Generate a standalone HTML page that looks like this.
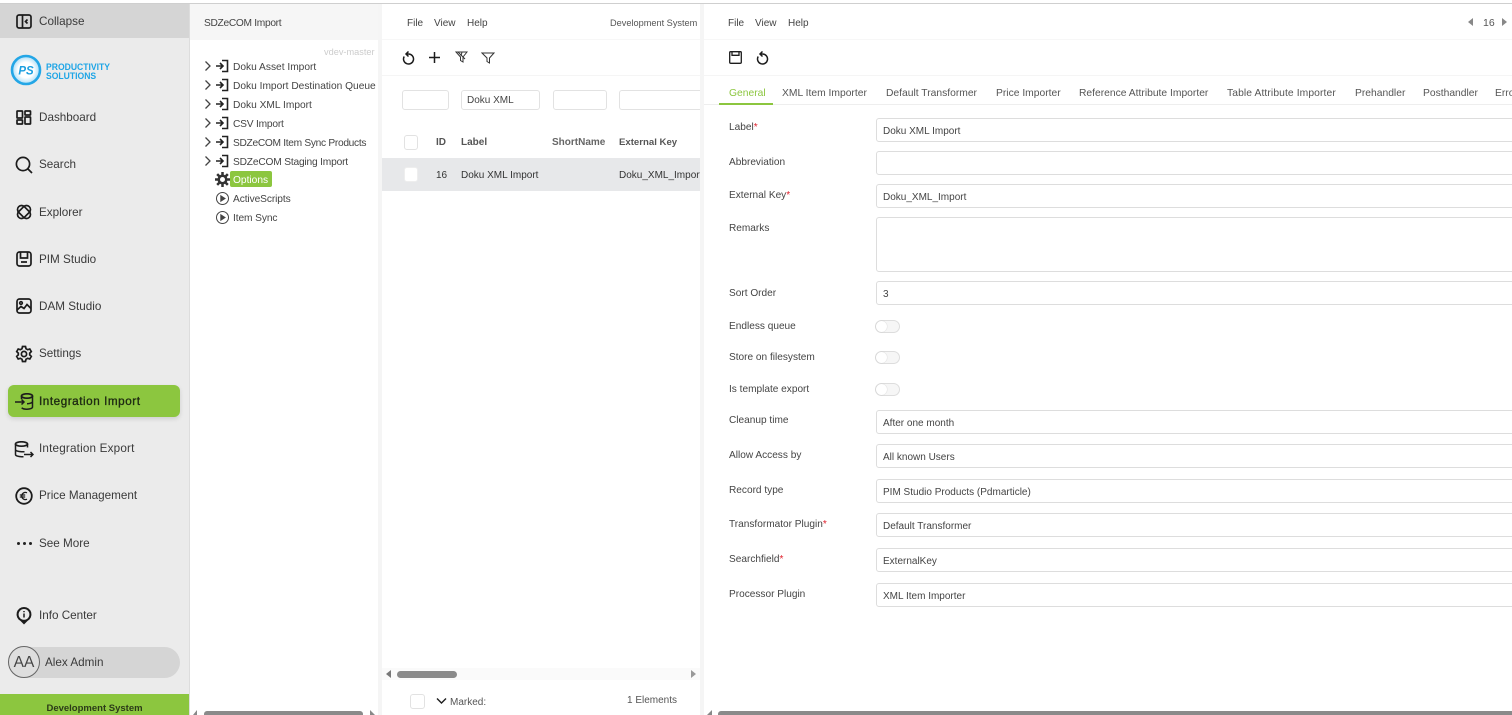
<!DOCTYPE html>
<html><head><meta charset="utf-8"><title>Integration Import</title>
<style>
html,body{margin:0;padding:0;width:1512px;height:715px;overflow:hidden;background:#fff}
body{position:relative;font-family:"Liberation Sans",sans-serif;color:#444;font-size:10.2px}
.a{position:absolute}
.t{position:absolute;white-space:nowrap;line-height:14px}
.n{font-size:11.7px;left:39px;color:#3a3a3a;line-height:16px;margin-top:1px}
.i{position:absolute;fill:none;stroke:#1c1c1c;stroke-width:1.7}
.tr{left:233px;color:#444;margin-top:2px}
.m{font-size:10px;top:17px}
.box{position:absolute;background:#fff;border:1px solid #e2e2e2;border-radius:3px;box-sizing:border-box}
.inp{position:absolute;left:876px;width:650px;height:24px;background:#fff;border:1px solid #ddd;border-radius:3px;box-sizing:border-box;padding:1px 0 0 6px;line-height:23px;font-size:10px;color:#444}
.lb{left:729px;color:#444;font-size:10.1px;margin-top:1px}
.lb b{color:#e0202c;font-weight:400}
.tab{top:87px;color:#555;font-size:10.3px}
.th{font-weight:700;color:#555;font-size:10px;top:136px}
.tg{position:absolute;left:875px;width:25px;height:13px;border:1px solid #ddd;border-radius:7px;box-sizing:border-box;background:#f6f6f6}
.tg i{position:absolute;left:0;top:0;width:11px;height:11px;border-radius:50%;background:#fff;box-shadow:0 0 1px #bbb}
</style></head><body>
<!-- backgrounds -->
<div class="a" style="left:0;top:4px;width:189px;height:711px;background:#ebebeb"></div>
<div class="a" style="left:189px;top:4px;width:1px;height:711px;background:#ddd"></div>
<div class="a" style="left:0;top:4px;width:189px;height:34px;background:#d5d5d5"></div>
<div class="a" style="left:190px;top:4px;width:192px;height:36px;background:#f6f6f6"></div>
<div class="a" style="left:378px;top:4px;width:4px;height:711px;background:#f5f5f5"></div>
<div class="a" style="left:700px;top:4px;width:4px;height:711px;background:#f5f5f5"></div>
<div class="a" style="left:382px;top:39px;width:318px;height:1px;background:#f7f7f7"></div>
<div class="a" style="left:382px;top:75px;width:318px;height:1px;background:#f5f5f5"></div>
<div class="a" style="left:704px;top:39px;width:808px;height:1px;background:#f7f7f7"></div>
<div class="a" style="left:704px;top:75px;width:808px;height:1px;background:#f5f5f5"></div>
<div class="a" style="left:704px;top:104px;width:808px;height:1px;background:#eee"></div>
<div class="a" style="left:0;top:3px;width:1512px;height:1px;background:#cfcfcf"></div>

<!-- sidebar -->
<svg class="i" style="left:16px;top:14px" width="16" height="15" viewBox="0 0 16 15"><rect x="1" y="1" width="14" height="13" rx="2"/><path d="M6.5 1v13M11.5 5.500L9.500 7.500l2 2"/></svg>
<div class="t n" style="top:13px">Collapse</div>

<svg class="a" style="left:10px;top:54px" width="32" height="32" viewBox="0 0 32 32"><defs><radialGradient id="g"><stop offset="55%" stop-color="#fff"/><stop offset="100%" stop-color="#a9ddf7"/></radialGradient></defs><circle cx="16" cy="16" r="14" fill="url(#g)" stroke="#23a6e6" stroke-width="2.600"/><text x="16" y="20.500" text-anchor="middle" font-family="Liberation Sans" font-size="11.500" font-weight="700" font-style="italic" fill="#1b9fe0">PS</text></svg>
<div class="t" style="left:46px;top:62px;font-size:8.600px;line-height:8px;font-weight:700;color:#1ea5e6;transform-origin:0 0;transform:scale(1,1.12)">PRODUCTIVITY<br>SOLUTIONS</div>

<svg class="i" style="left:16px;top:110px" width="16" height="15" viewBox="0 0 16 15"><rect x="1" y="1" width="5.500" height="7" rx=".5"/><rect x="1" y="10" width="5.500" height="4" rx=".5"/><rect x="9" y="1" width="5.500" height="4" rx=".5"/><rect x="9" y="7" width="5.500" height="7" rx=".5"/></svg>
<div class="t n" style="top:109px">Dashboard</div>

<svg class="i" style="left:15px;top:156px" width="18" height="18" viewBox="0 0 18 18"><circle cx="8" cy="8" r="6.600"/><path d="M13 13l4 4"/></svg>
<div class="t n" style="top:156px">Search</div>

<svg class="i" style="left:15px;top:203px" width="18" height="18" viewBox="0 0 18 18"><rect x="1.500" y="5" width="15" height="8" rx="4" transform="rotate(45 9 9)"/><rect x="1.500" y="5" width="15" height="8" rx="4" transform="rotate(-45 9 9)"/></svg>
<div class="t n" style="top:204px">Explorer</div>

<svg class="i" style="left:16px;top:251px" width="16" height="16" viewBox="0 0 16 16"><rect x="1" y="1" width="14" height="14" rx="2.500"/><path d="M4.500 1v6h7V1M5 11h6"/></svg>
<div class="t n" style="top:251px">PIM Studio</div>

<svg class="i" style="left:16px;top:298px" width="16" height="16" viewBox="0 0 16 16"><rect x="1" y="1" width="14" height="14" rx="2.500"/><circle cx="5" cy="5" r="1.300"/><path d="M1 12l4-3.500 3 2 3-4 4 4"/></svg>
<div class="t n" style="top:298px">DAM Studio</div>

<svg class="i" style="left:15px;top:345px" width="18" height="18" viewBox="0 0 18 18"><circle cx="9" cy="9" r="2.600"/><path d="M7.500 1.500h3l.5 2.200 1.700 1 2.100-.7 1.500 2.600-1.600 1.500v1.800l1.600 1.500-1.500 2.600-2.100-.7-1.700 1-.5 2.200h-3l-.5-2.200-1.700-1-2.100.7-1.500-2.600 1.600-1.500V8.100L1.700 6.600 3.200 4l2.100.7 1.700-1z"/></svg>
<div class="t n" style="top:345px">Settings</div>

<div class="a" style="left:8px;top:385px;width:172px;height:32px;background:#8cc63f;border-radius:6px;box-shadow:0 2px 5px rgba(0,0,0,.12)"></div>
<svg class="i" style="left:14px;top:393px" width="20" height="17" viewBox="0 0 20 17"><ellipse cx="13" cy="3" rx="5.500" ry="2.200"/><path d="M7.500 3v3M18.500 3v11c0 1.300-2.500 2.200-5.500 2.200-2.500 0-4.500-.6-5.300-1.500M18.500 8.500c0 1.200-2.500 2.200-5.500 2.200M1 9h9M7.500 6.500L10 9l-2.500 2.500" stroke-width="1.500"/></svg>
<div class="t n" style="top:393px;color:#1e2a12;-webkit-text-stroke:.35px #1e2a12;letter-spacing:.55px">Integration Import</div>

<svg class="i" style="left:14px;top:441px" width="20" height="17" viewBox="0 0 20 17"><ellipse cx="7.500" cy="3" rx="6" ry="2.200"/><path d="M1.500 3v10.500c0 1.300 2.700 2.200 6 2.200h2M1.500 8.500c0 1.300 2.700 2.200 6 2.200h3M13.500 3v3.500M10 13.500h9M16.500 11l2.500 2.500-2.500 2.500" stroke-width="1.500"/></svg>
<div class="t n" style="top:440px;letter-spacing:.18px">Integration Export</div>

<svg class="i" style="left:15px;top:487px" width="18" height="18" viewBox="0 0 18 18"><circle cx="9" cy="9" r="7.800" stroke-width="1.800"/><path d="M12 5.800a3.600 3.600 0 1 0 0 6.400M4.800 8h5.400M4.800 10h5.400" stroke-width="1.300"/></svg>
<div class="t n" style="top:487px">Price Management</div>

<div class="a" style="left:17px;top:542px;width:3px;height:3px;border-radius:50%;background:#222;box-shadow:6px 0 0 #222,12px 0 0 #222"></div>
<div class="t n" style="top:535px">See More</div>

<svg class="a" style="left:15px;top:606px" width="18" height="20" viewBox="0 0 18 20"><path d="M9 1a7.400 7.400 0 0 0-3.600 13.900L9 18.500l3.600-3.600A7.400 7.400 0 0 0 9 1z" fill="#1c1c1c"/><circle cx="9" cy="8.400" r="5.400" fill="#ebebeb"/><path d="M9 7.500v4M9 5v1.200" stroke="#1c1c1c" stroke-width="1.500"/></svg>
<div class="t n" style="top:607px">Info Center</div>

<div class="a" style="left:8px;top:647px;width:172px;height:31px;background:#d5d5d5;border-radius:16px"></div>
<div class="a" style="left:8px;top:646px;width:32px;height:32px;box-sizing:border-box;border:1px solid #666;border-radius:50%;background:#dedede;text-align:center;line-height:31px;font-size:15.500px;color:#444">AA</div>
<div class="t n" style="left:45px;top:654px">Alex Admin</div>

<div class="a" style="left:0;top:694px;width:189px;height:21px;background:#8cc63f"></div>
<div class="t" style="left:0;width:189px;text-align:center;top:702px;font-size:9.500px;font-weight:700;color:#2b3a18">Development System</div>

<!-- tree panel -->
<div class="t" style="left:204px;top:17px;color:#444;letter-spacing:-.3px">SDZeCOM Import</div>
<div class="t" style="left:324px;top:45px;color:#ccc;font-size:9.200px">vdev-master</div>
<svg class="a" style="left:203px;top:59px" width="28" height="114" viewBox="0 0 28 114" fill="none" stroke="#444" stroke-width="1.300">
<g><path d="M2.500 2.500L7 7 2.500 11.500"/><path d="M13 7h7M17 4l3 3-3 3M19 1.500h5.500v11H19" stroke="#222" stroke-width="1.600"/></g>
<g transform="translate(0,19)"><path d="M2.500 2.500L7 7 2.500 11.500"/><path d="M13 7h7M17 4l3 3-3 3M19 1.500h5.500v11H19" stroke="#222" stroke-width="1.600"/></g>
<g transform="translate(0,38)"><path d="M2.500 2.500L7 7 2.500 11.500"/><path d="M13 7h7M17 4l3 3-3 3M19 1.500h5.500v11H19" stroke="#222" stroke-width="1.600"/></g>
<g transform="translate(0,57)"><path d="M2.500 2.500L7 7 2.500 11.500"/><path d="M13 7h7M17 4l3 3-3 3M19 1.500h5.500v11H19" stroke="#222" stroke-width="1.600"/></g>
<g transform="translate(0,76)"><path d="M2.500 2.500L7 7 2.500 11.500"/><path d="M13 7h7M17 4l3 3-3 3M19 1.500h5.500v11H19" stroke="#222" stroke-width="1.600"/></g>
<g transform="translate(0,95)"><path d="M2.500 2.500L7 7 2.500 11.500"/><path d="M13 7h7M17 4l3 3-3 3M19 1.500h5.500v11H19" stroke="#222" stroke-width="1.600"/></g>
</svg>
<div class="t tr" style="top:59px">Doku Asset Import</div>
<div class="t tr" style="top:78px">Doku Import Destination Queue</div>
<div class="t tr" style="top:97px">Doku XML Import</div>
<div class="t tr" style="top:116px;letter-spacing:-.2px">CSV Import</div>
<div class="t tr" style="top:135px;letter-spacing:-.3px">SDZeCOM Item Sync Products</div>
<div class="t tr" style="top:154px;letter-spacing:-.18px">SDZeCOM Staging Import</div>
<svg class="a" style="left:215px;top:172px" width="15" height="15" viewBox="0 0 18 18"><circle cx="9" cy="9" r="4.500" fill="none" stroke="#333" stroke-width="3"/><path d="M9 0v4M9 14v4M0 9h4M14 9h4M2.600 2.600l3 3M12.400 12.400l3 3M15.400 2.600l-3 3M5.600 12.400l-3 3" stroke="#333" stroke-width="3"/></svg>
<div class="a" style="left:230px;top:171px;width:42px;height:16px;background:#8cc63f;border-radius:2px"></div>
<div class="t" style="left:233px;top:174px;color:#fff">Options</div>
<svg class="a" style="left:215px;top:191px" width="15" height="34" viewBox="0 0 15 34" fill="none" stroke="#444" stroke-width="1"><circle cx="7.500" cy="7.500" r="6"/><path d="M5.800 4.800l4.200 2.700-4.200 2.700z" fill="#444"/><circle cx="7.500" cy="26.500" r="6"/><path d="M5.800 23.800l4.200 2.700-4.200 2.700z" fill="#444"/></svg>
<div class="t tr" style="top:191px;letter-spacing:-.1px">ActiveScripts</div>
<div class="t tr" style="top:210px;letter-spacing:-.1px">Item Sync</div>

<!-- list panel -->
<div class="t m" style="left:407px">File</div>
<div class="t m" style="left:434px">View</div>
<div class="t m" style="left:467px">Help</div>
<div class="t" style="left:610px;top:16px;color:#555;font-size:9.200px">Development System</div>
<svg class="i" style="left:402px;top:51px;stroke-width:1.500" width="13" height="15" viewBox="0 0 13 15"><path d="M2.200 5.500A5 5 0 1 0 6.500 3h-2M6.500.5L4 3l2.500 2.500"/></svg>
<svg class="i" style="left:428px;top:51px;stroke-width:1.500" width="13" height="13" viewBox="0 0 13 13"><path d="M6.500 1v11M1 6.500h11"/></svg>
<svg class="i" style="left:455px;top:51px;stroke-width:1;stroke:#333" width="13" height="12" viewBox="0 0 13 12"><path d="M1 1h11L8 6v5L5.500 9.500V6zM3 1l7 7M7 1l-1 4"/></svg>
<svg class="i" style="left:481px;top:52px;stroke-width:1;stroke:#333" width="14" height="12" viewBox="0 0 14 12"><path d="M1 1h12L8.500 6v5L6 9.500V6z"/></svg>
<div class="box" style="left:402px;top:90px;width:47px;height:20px"></div>
<div class="box" style="left:461px;top:90px;width:79px;height:20px;padding:1px 0 0 5px;line-height:18px;font-size:10px">Doku XML</div>
<div class="box" style="left:553px;top:90px;width:54px;height:20px"></div>
<div class="box" style="left:619px;top:90px;width:81px;height:20px;border-right:0;border-radius:3px 0 0 3px"></div>
<div class="box" style="left:404px;top:135px;width:14px;height:15px"></div>
<div class="t th" style="left:436px">ID</div>
<div class="t th" style="left:461px">Label</div>
<div class="t th" style="left:552px;color:#666">ShortName</div>
<div class="t th" style="left:619px;font-size:9.600px">External Key</div>
<div class="a" style="left:382px;top:158px;width:318px;height:33px;background:#e7e8ea"></div>
<div class="box" style="left:404px;top:167px;width:14px;height:15px;border-color:#eee"></div>
<div class="t" style="left:436px;top:169px;color:#333;font-size:10px">16</div>
<div class="t" style="left:461px;top:169px;color:#333;font-size:10px">Doku XML Import</div>
<div class="a" style="left:619px;top:169px;width:81px;height:14px;overflow:hidden"><div class="t" style="left:0;top:0;color:#333;font-size:10px">Doku_XML_Import</div></div>
<div class="a" style="left:382px;top:668px;width:318px;height:12px;background:#fafafa"></div>
<div class="a" style="left:397px;top:671px;width:60px;height:7px;background:#8a8a8a;border-radius:4px"></div>
<svg class="a" style="left:385px;top:670px" width="312" height="9" viewBox="0 0 312 9" fill="#777"><path d="M6 0v8L1 4z"/><path d="M306 0v8l5-4z" fill="#999"/></svg>
<div class="box" style="left:410px;top:694px;width:15px;height:15px"></div>
<svg class="i" style="left:436px;top:697px;stroke-width:1.400" width="11" height="8" viewBox="0 0 11 8"><path d="M1 1.500l4.500 4.500L10 1.500"/></svg>
<div class="t" style="left:450px;top:696px;color:#555;font-size:10px">Marked:</div>
<div class="t" style="left:627px;top:694px;color:#555;font-size:10px">1 Elements</div>

<!-- detail panel -->
<div class="t m" style="left:728px">File</div>
<div class="t m" style="left:755px">View</div>
<div class="t m" style="left:788px">Help</div>
<svg class="a" style="left:1467px;top:18px" width="40" height="8" viewBox="0 0 40 8" fill="#888"><path d="M6 0v8L1 4z"/><path d="M35 0v8l5-4z"/></svg>
<div class="t" style="left:1483px;top:16px;color:#555;font-size:10.500px">16</div>
<svg class="i" style="left:729px;top:51px;stroke-width:1.300" width="13" height="13" viewBox="0 0 13 13"><rect x=".7" y=".7" width="11.600" height="11.600" rx="1"/><path d="M3 .7v3.600h7V.7"/></svg>
<svg class="i" style="left:756px;top:51px;stroke-width:1.500" width="13" height="15" viewBox="0 0 13 15"><path d="M2.200 5.500A5 5 0 1 0 6.500 3h-2M6.500.5L4 3l2.500 2.500"/></svg>

<div class="t tab" style="left:729px;color:#8cc63f">General</div>
<div class="a" style="left:719px;top:103px;width:54px;height:2px;background:#8cc63f"></div>
<div class="t tab" style="left:782px">XML Item Importer</div>
<div class="t tab" style="left:886px">Default Transformer</div>
<div class="t tab" style="left:996px">Price Importer</div>
<div class="t tab" style="left:1079px">Reference Attribute Importer</div>
<div class="t tab" style="left:1227px;letter-spacing:.1px">Table Attribute Importer</div>
<div class="t tab" style="left:1355px">Prehandler</div>
<div class="t tab" style="left:1423px">Posthandler</div>
<div class="t tab" style="left:1495px">Errors</div>

<div class="t lb" style="top:120px">Label<b>*</b></div><div class="inp" style="top:118px">Doku XML Import</div>
<div class="t lb" style="top:155px">Abbreviation</div><div class="inp" style="top:151px"></div>
<div class="t lb" style="top:188px">External Key<b>*</b></div><div class="inp" style="top:184px">Doku_XML_Import</div>
<div class="t lb" style="top:221px">Remarks</div><div class="inp" style="top:217px;height:55px"></div>
<div class="t lb" style="top:286px">Sort Order</div><div class="inp" style="top:281px">3</div>
<div class="t lb" style="top:319px">Endless queue</div><div class="tg" style="top:320px"><i></i></div>
<div class="t lb" style="top:350px">Store on filesystem</div><div class="tg" style="top:351px"><i></i></div>
<div class="t lb" style="top:382px">Is template export</div><div class="tg" style="top:383px"><i></i></div>
<div class="t lb" style="top:413px">Cleanup time</div><div class="inp" style="top:410px">After one month</div>
<div class="t lb" style="top:448px">Allow Access by</div><div class="inp" style="top:444px">All known Users</div>
<div class="t lb" style="top:483px">Record type</div><div class="inp" style="top:479px">PIM Studio Products (Pdmarticle)</div>
<div class="t lb" style="top:517px">Transformator Plugin<b>*</b></div><div class="inp" style="top:513px">Default Transformer</div>
<div class="t lb" style="top:552px">Searchfield<b>*</b></div><div class="inp" style="top:548px">ExternalKey</div>
<div class="t lb" style="top:587px">Processor Plugin</div><div class="inp" style="top:583px">XML Item Importer</div>

<!-- bottom scrollbars -->
<div class="a" style="left:204px;top:711px;width:159px;height:4px;background:#8a8a8a;border-radius:3px 3px 0 0"></div>
<div class="a" style="left:718px;top:711px;width:794px;height:4px;background:#8a8a8a;border-radius:3px 0 0 0"></div>
<svg class="a" style="left:192px;top:710px" width="186" height="5" viewBox="0 0 186 5" fill="#888"><path d="M5 0v5H1z"/><path d="M178 0v5h5z"/></svg>
<svg class="a" style="left:706px;top:710px" width="8" height="5" viewBox="0 0 8 5" fill="#888"><path d="M6 0v5H1z"/></svg>
</body></html>
